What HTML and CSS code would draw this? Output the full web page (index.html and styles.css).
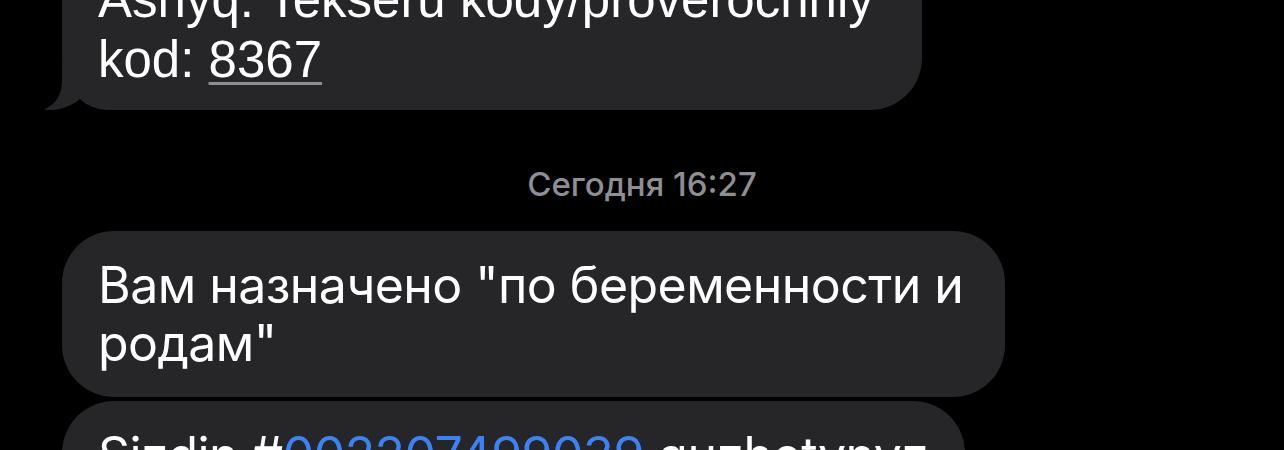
FILE: index.html
```html
<!DOCTYPE html>
<html lang="ru">
<head>
<meta charset="utf-8">
<title>Messages</title>
<link rel="stylesheet" href="styles.css">
</head>
<body>
<main class="thread">
  <div class="bubble bubble-first">
    <svg class="tail" width="70" height="52" viewBox="40 60 70 52" aria-hidden="true">
      <path d="M62 58 L62 80 C62 95 56 104 44 109.5 C57 111.5 70 107 80 99 C88 106 96 110 110 110 L110 58 Z" fill="#262628"/>
    </svg>
    <p class="text text-latin">Ashyq: Tekseru kody/proverochniy<br>kod: <span class="code">8367</span></p>
  </div>
  <div class="stamp">Сегодня 16:27</div>
  <div class="bubble bubble-second">
    <p class="text">Вам назначено "по беременности и<br>родам"</p>
  </div>
  <div class="bubble bubble-third">
    <p class="text">Sizdin #<span class="link">002207499039</span> quzhetynyz<br>qabyldandy</p>
  </div>
</main>
</body>
</html>
```
FILE: styles.css
```css
html, body {
  margin: 0;
  padding: 0;
  background: #000;
  height: 450px;
  overflow: hidden;
}
.thread {
  display: flex;
  flex-direction: column;
  align-items: flex-start;
  padding-left: 62px;
  margin-top: -55px;
}
.bubble {
  position: relative;
  background: #262628;
  border-radius: 52px;
  box-sizing: border-box;
  padding: 25px 0 25px 36px;
}
.text {
  position: relative;
  margin: 0;
  color: #fff;
  font-family: Inter, "Noto Sans", sans-serif;
  font-size: 50px;
  letter-spacing: -0.55px;
  line-height: 58px;
  white-space: nowrap;
}
.text-latin {
  font-family: "Liberation Sans", Arial, sans-serif;
  font-size: 51px;
  letter-spacing: 0;
  line-height: 60px;
}
.bubble-first {
  width: 860px;
  padding-top: 25px;
  padding-bottom: 20px;
}
.bubble-second {
  width: 943px;
}
.bubble-third {
  width: 903px;
  margin-top: 4px;
}
.code {
  text-decoration: underline;
  text-decoration-color: #8e8e93;
  text-decoration-thickness: 3px;
  text-underline-offset: 5px;
}
.link {
  color: #3b82f6;
}
.tail {
  position: absolute;
  left: -22px;
  bottom: -2px;
}
.stamp {
  align-self: center;
  margin-left: -62px;
  margin-top: 54px;
  margin-bottom: 27px;
  color: #8e8e93;
  font-family: Inter, "Noto Sans", sans-serif;
  font-size: 33px;
  font-weight: 500;
  line-height: 40px;
}
```
